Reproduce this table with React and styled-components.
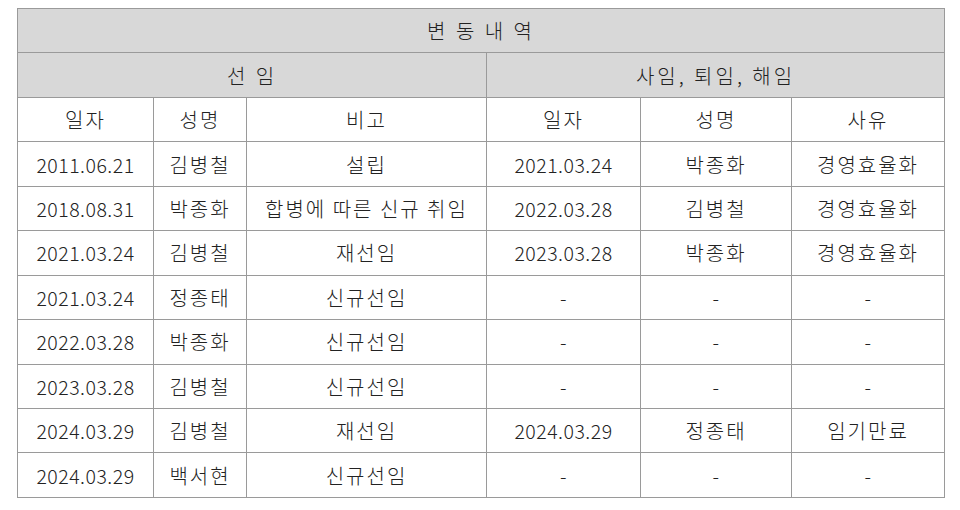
import React from 'react';
import styled, { createGlobalStyle } from 'styled-components';

const GlobalStyle = createGlobalStyle`
  html, body {
    margin: 0;
    padding: 0;
    background: #fff;
  }
  body {
    font-family: "Noto Sans CJK KR", "Noto Sans", sans-serif;
  }
`;

const Page = styled.div`
  padding: 8px 0 0 17px;
`;

const Table = styled.table`
  width: 928px;
  border-collapse: collapse;
  table-layout: fixed;
  border: 1px solid #222;
  color: #222;
  font-size: 20px;
  font-weight: 300;
`;

const Row = styled.tr`
  height: 44.45px;
`;

const HeadCell = styled.th`
  background: #d8d8d8;
  font-weight: 300;
  border: 1px solid #9a9a9a;
  padding: 0;
  text-align: center;
  letter-spacing: ${(p) => p.$spacing || '2px'};
`;

const Cell = styled.td`
  border: 1px solid #9a9a9a;
  padding: 0;
  text-align: center;
  font-size: ${(p) => (p.$num ? '19.5px' : '20px')};
  letter-spacing: ${(p) => (p.$num ? '0.5px' : '2px')};
`;

const cols = [136, 93, 240, 154, 151, 153];

const rows = [
  ['2011.06.21', '김병철', '설립', '2021.03.24', '박종화', '경영효율화'],
  ['2018.08.31', '박종화', '합병에 따른 신규 취임', '2022.03.28', '김병철', '경영효율화'],
  ['2021.03.24', '김병철', '재선임', '2023.03.28', '박종화', '경영효율화'],
  ['2021.03.24', '정종태', '신규선임', '-', '-', '-'],
  ['2022.03.28', '박종화', '신규선임', '-', '-', '-'],
  ['2023.03.28', '김병철', '신규선임', '-', '-', '-'],
  ['2024.03.29', '김병철', '재선임', '2024.03.29', '정종태', '임기만료'],
  ['2024.03.29', '백서현', '신규선임', '-', '-', '-'],
];

const isNum = (v) => /^[\d.\-]+$/.test(v);

export default function App() {
  return (
    <Page>
      <GlobalStyle />
      <Table>
        <colgroup>
          {cols.map((w, i) => (
            <col key={i} style={{ width: w }} />
          ))}
        </colgroup>
        <thead>
          <Row>
            <HeadCell colSpan={6} $spacing="3px">변 동 내 역</HeadCell>
          </Row>
          <Row>
            <HeadCell colSpan={3} $spacing="3px">선 임</HeadCell>
            <HeadCell colSpan={3} $spacing="3px">사임, 퇴임, 해임</HeadCell>
          </Row>
          <Row>
            {['일자', '성명', '비고', '일자', '성명', '사유'].map((h, i) => (
              <Cell key={i}>{h}</Cell>
            ))}
          </Row>
        </thead>
        <tbody>
          {rows.map((r, i) => (
            <Row key={i}>
              {r.map((v, j) => (
                <Cell key={j} $num={isNum(v)}>{v}</Cell>
              ))}
            </Row>
          ))}
        </tbody>
      </Table>
    </Page>
  );
}
